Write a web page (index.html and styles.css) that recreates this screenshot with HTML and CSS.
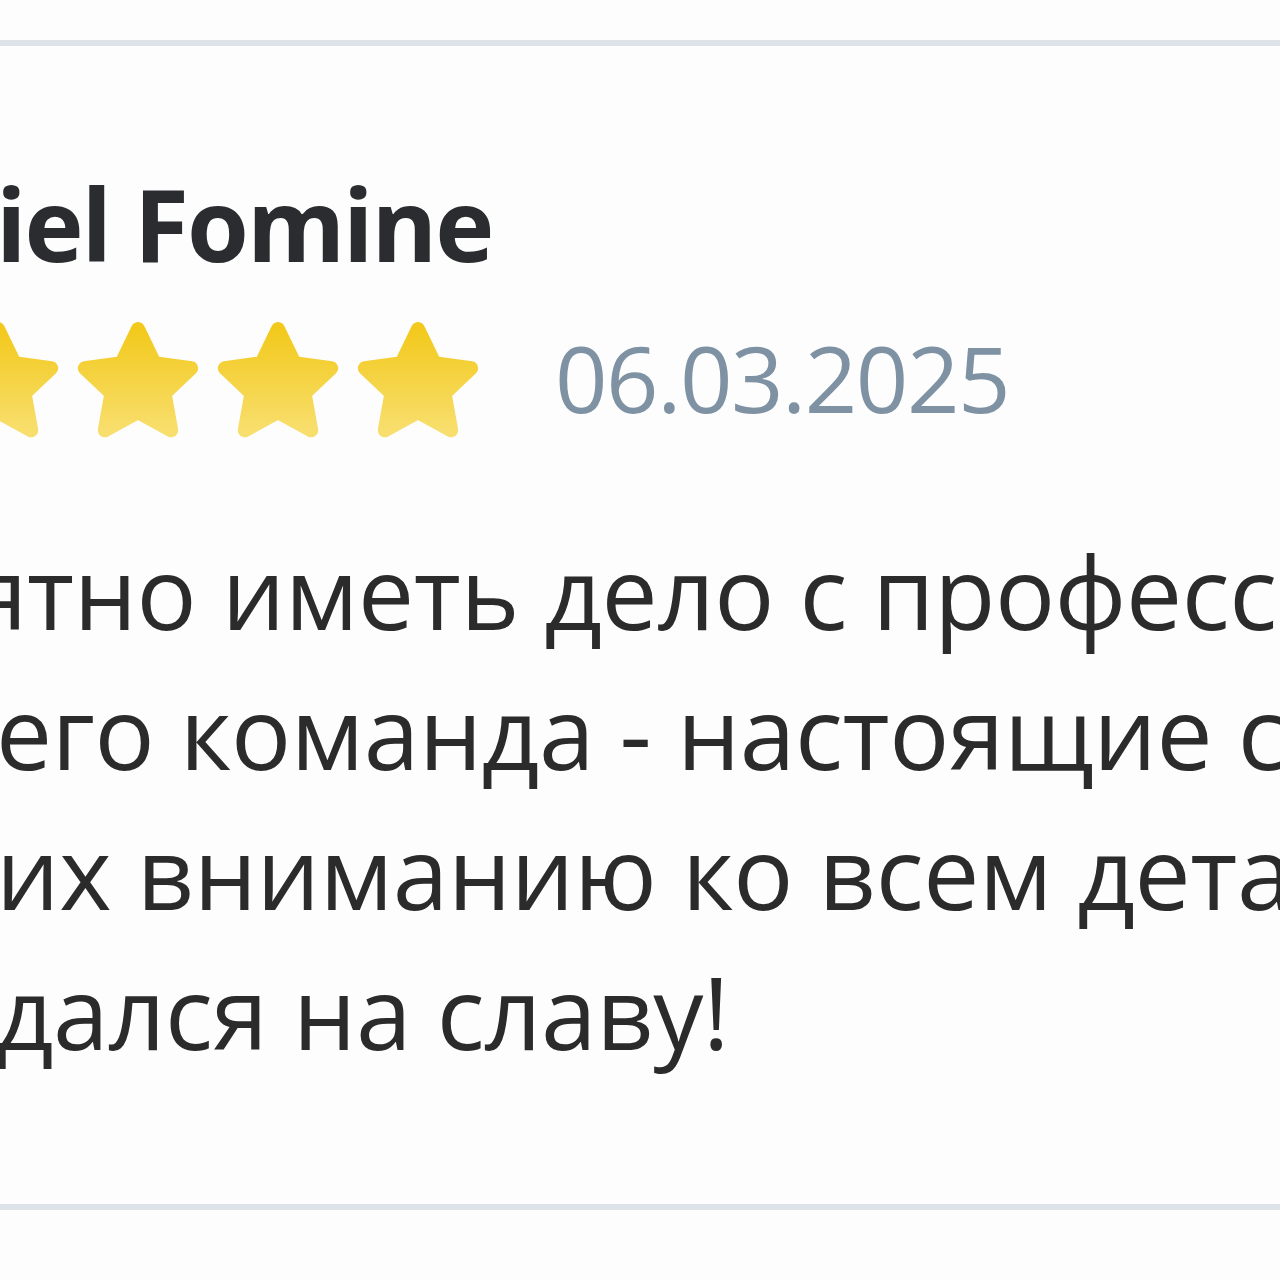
FILE: index.html
```html
<!DOCTYPE html>
<html lang="ru">
<head>
<meta charset="utf-8">
<title>Отзыв</title>
<link rel="stylesheet" href="styles.css">
</head>
<body>
<article class="review">
  <h2 class="review-author">iel Fomine</h2>
  <div class="review-meta">
    <div class="stars">
      <svg class="star" viewBox="0 0 120 116" width="120" height="116"><defs><linearGradient id="sg" x1="0" y1="0" x2="0" y2="1"><stop offset="0" stop-color="#f2c91c"/><stop offset="1" stop-color="#f8de6c"/></linearGradient></defs><polygon points="60,7 76.6,41.2 113.2,46.2 86.6,71.5 93.2,108.3 60,90.2 26.8,108.3 33.4,71.5 6.8,46.2 43.4,41.2" fill="url(#sg)" stroke="url(#sg)" stroke-width="14" stroke-linejoin="round"/></svg>
      <svg class="star" viewBox="0 0 120 116" width="120" height="116"><polygon points="60,7 76.6,41.2 113.2,46.2 86.6,71.5 93.2,108.3 60,90.2 26.8,108.3 33.4,71.5 6.8,46.2 43.4,41.2" fill="url(#sg)" stroke="url(#sg)" stroke-width="14" stroke-linejoin="round"/></svg>
      <svg class="star" viewBox="0 0 120 116" width="120" height="116"><polygon points="60,7 76.6,41.2 113.2,46.2 86.6,71.5 93.2,108.3 60,90.2 26.8,108.3 33.4,71.5 6.8,46.2 43.4,41.2" fill="url(#sg)" stroke="url(#sg)" stroke-width="14" stroke-linejoin="round"/></svg>
      <svg class="star" viewBox="0 0 120 116" width="120" height="116"><polygon points="60,7 76.6,41.2 113.2,46.2 86.6,71.5 93.2,108.3 60,90.2 26.8,108.3 33.4,71.5 6.8,46.2 43.4,41.2" fill="url(#sg)" stroke="url(#sg)" stroke-width="14" stroke-linejoin="round"/></svg>
    </div>
    <time class="review-date" datetime="2025-03-06">06.03.2025</time>
  </div>
  <p class="review-text">ятно иметь дело с профессионалами!<br>его команда - настоящие специалисты<br>их вниманию ко всем деталям<br>дался на славу!</p>
</article>
</body>
</html>
```
FILE: styles.css
```css
html, body {
  margin: 0;
  padding: 0;
  background: #fdfdfd;
  overflow: hidden;
}

body {
  width: 1280px;
  height: 1280px;
}

.review {
  margin-top: 40px;
  border-top: 6px solid #dde3e8;
  border-bottom: 6px solid #dde3e8;
  padding: 124px 0 123px 0;
  font-family: "Open Sans", "Noto Sans", sans-serif;
  overflow: hidden;
}

.review-author {
  margin: 0 0 0 -4px;
  font-size: 100px;
  line-height: 106px;
  font-weight: 700;
  letter-spacing: -2px;
  color: #2a2c2f;
  white-space: nowrap;
}

.review-meta {
  display: flex;
  align-items: center;
  margin: 46px 0 0 -62px;
  height: 116px;
}

.stars {
  display: flex;
  gap: 20px;
}

.star {
  display: block;
  overflow: visible;
}

.review-date {
  margin-left: 77px;
  font-size: 92px;
  line-height: 92px;
  letter-spacing: -1.5px;
  color: #7e92a4;
  padding-bottom: 4px;
}

.review-text {
  margin: 83px 0 0 -4px;
  text-indent: -24px;
  font-size: 100px;
  line-height: 140px;
  letter-spacing: -0.4px;
  color: #2b2b2b;
  white-space: nowrap;
}
```
